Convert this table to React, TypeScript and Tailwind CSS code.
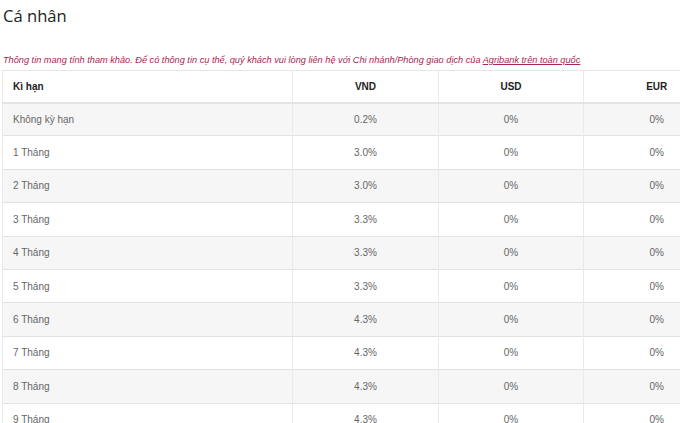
import React from "react";

const rows: [string, string, string, string][] = [
  ["Không kỳ hạn", "0.2%", "0%", "0%"],
  ["1 Tháng", "3.0%", "0%", "0%"],
  ["2 Tháng", "3.0%", "0%", "0%"],
  ["3 Tháng", "3.3%", "0%", "0%"],
  ["4 Tháng", "3.3%", "0%", "0%"],
  ["5 Tháng", "3.3%", "0%", "0%"],
  ["6 Tháng", "4.3%", "0%", "0%"],
  ["7 Tháng", "4.3%", "0%", "0%"],
  ["8 Tháng", "4.3%", "0%", "0%"],
  ["9 Tháng", "4.3%", "0%", "0%"],
];

export default function App() {
  return (
    <div className="w-[680px] h-[423px] overflow-hidden bg-white">
      <div className="pl-[2px]">
        <h2 className="pt-[3px] pl-px text-[16.6px] leading-[26px] text-[#222] font-['Open_Sans',sans-serif]">
          Cá nhân
        </h2>
        <p className="mt-[24px] pl-px text-[9.2px] leading-[14px] italic text-[#a8284f] font-['Liberation_Sans',Arial,sans-serif]">
          Thông tin mang tính tham khảo. Để có thông tin cụ thể, quý khách vui lòng liên hệ với Chi nhánh/Phòng giao dịch của{" "}
          <span className="underline">Agribank trên toàn quốc</span>
        </p>
        <table className="mt-[3px] w-[727px] table-fixed border-collapse font-['Liberation_Sans',Arial,sans-serif] text-[10px]">
          <colgroup>
            <col className="w-[290px]" />
            <col className="w-[146px]" />
            <col className="w-[145px]" />
            <col className="w-[146px]" />
          </colgroup>
          <thead>
            <tr className="border-t border-[#e6e6e6] border-b-2 border-b-[#e4e4e4]">
              <th className="h-[32px] pl-[10px] text-left font-bold text-[#222] border-l border-[#eaeaea]">Kì hạn</th>
              <th className="h-[32px] text-center font-bold text-[#222] border-l border-[#eaeaea]">VND</th>
              <th className="h-[32px] text-center font-bold text-[#222] border-l border-[#eaeaea]">USD</th>
              <th className="h-[32px] text-center font-bold text-[#222] border-l border-[#eaeaea]">EUR</th>
            </tr>
          </thead>
          <tbody>
            {rows.map((r, i) => (
              <tr
                key={r[0]}
                className={`border-b border-[#e2e2e2] ${i % 2 === 0 ? "bg-[#f6f6f6]" : "bg-white"}`}
              >
                <td className="h-[33.4px] pl-[10px] text-left text-[#666] border-l border-[#eaeaea]">{r[0]}</td>
                <td className="h-[33.4px] text-center text-[#666] border-l border-[#eaeaea]">{r[1]}</td>
                <td className="h-[33.4px] text-center text-[#666] border-l border-[#eaeaea]">{r[2]}</td>
                <td className="h-[33.4px] text-center text-[#666] border-l border-[#eaeaea]">{r[3]}</td>
              </tr>
            ))}
          </tbody>
        </table>
      </div>
    </div>
  );
}
